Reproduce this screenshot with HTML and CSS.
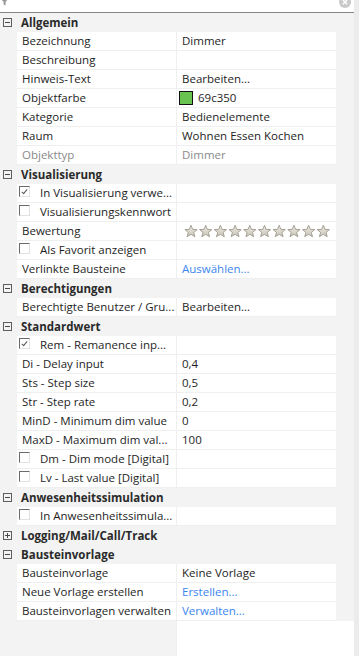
FILE: index.html
```html
<!DOCTYPE html>
<html lang="de">
<head>
<meta charset="utf-8">
<link rel="stylesheet" href="styles.css">
</head>
<body>
<div class="page">
  <div class="topbar">
    <svg class="filter" width="8" height="7" viewBox="0 0 8 7"><path d="M0 0 H7 L4.6 3 V6.5 L2.6 5.5 V3 Z" fill="#9a9a9a"/></svg>
    <span class="clear"><svg width="12" height="12" viewBox="0 0 12 12"><circle cx="6" cy="6" r="6" fill="#c9c9c9"/><path d="M3.8 3.8 L8.2 8.2 M8.2 3.8 L3.8 8.2" stroke="#fff" stroke-width="1.4"/></svg></span>
  </div>

  <div class="panel">
    <div class="group"><span class="tog minus"></span><span class="gt">Allgemein</span></div>
    <div class="row"><div class="n">Bezeichnung</div><div class="v">Dimmer</div></div>
    <div class="row"><div class="n">Beschreibung</div><div class="v"></div></div>
    <div class="row"><div class="n">Hinweis-Text</div><div class="v">Bearbeiten...</div></div>
    <div class="row"><div class="n">Objektfarbe</div><div class="v"><span class="swatch"></span>69c350</div></div>
    <div class="row"><div class="n">Kategorie</div><div class="v">Bedienelemente</div></div>
    <div class="row"><div class="n">Raum</div><div class="v">Wohnen Essen Kochen</div></div>
    <div class="row dis"><div class="n">Objekttyp</div><div class="v">Dimmer</div></div>

    <div class="group"><span class="tog minus"></span><span class="gt">Visualisierung</span></div>
    <div class="row"><div class="n chk"><span class="cb on"></span>In Visualisierung verwe...</div><div class="v"></div></div>
    <div class="row"><div class="n chk"><span class="cb"></span>Visualisierungskennwort</div><div class="v"></div></div>
    <div class="row"><div class="n">Bewertung</div><div class="v stars">
      <svg width="150" height="14" viewBox="0 0 150 14">
        <defs>
          <linearGradient id="sg" x1="0" y1="0" x2="0" y2="1"><stop offset="0" stop-color="#ecebe6"/><stop offset="1" stop-color="#c9c5b8"/></linearGradient>
          <path id="st" d="M6.5 0.8 L8.2 4.9 L12.6 5.1 L9.2 7.9 L10.4 12.2 L6.5 9.8 L2.6 12.2 L3.8 7.9 L0.4 5.1 L4.8 4.9 Z" fill="url(#sg)" stroke="#9e998a" stroke-width="0.9" stroke-linejoin="round"/>
        </defs>
        <use href="#st" x="0.5" y="0.5"/>
        <use href="#st" x="15.2" y="0.5"/>
        <use href="#st" x="29.9" y="0.5"/>
        <use href="#st" x="44.6" y="0.5"/>
        <use href="#st" x="59.3" y="0.5"/>
        <use href="#st" x="74" y="0.5"/>
        <use href="#st" x="88.7" y="0.5"/>
        <use href="#st" x="103.4" y="0.5"/>
        <use href="#st" x="118.1" y="0.5"/>
        <use href="#st" x="132.8" y="0.5"/>
      </svg>
    </div></div>
    <div class="row"><div class="n chk"><span class="cb"></span>Als Favorit anzeigen</div><div class="v"></div></div>
    <div class="row"><div class="n">Verlinkte Bausteine</div><div class="v link">Auswählen...</div></div>

    <div class="group"><span class="tog minus"></span><span class="gt">Berechtigungen</span></div>
    <div class="row"><div class="n">Berechtigte Benutzer / Gru...</div><div class="v">Bearbeiten...</div></div>

    <div class="group"><span class="tog minus"></span><span class="gt">Standardwert</span></div>
    <div class="row"><div class="n chk"><span class="cb on"></span>Rem - Remanence inp...</div><div class="v"></div></div>
    <div class="row"><div class="n">Di - Delay input</div><div class="v">0,4</div></div>
    <div class="row"><div class="n">Sts - Step size</div><div class="v">0,5</div></div>
    <div class="row"><div class="n">Str - Step rate</div><div class="v">0,2</div></div>
    <div class="row"><div class="n">MinD - Minimum dim value</div><div class="v">0</div></div>
    <div class="row"><div class="n">MaxD - Maximum dim val...</div><div class="v">100</div></div>
    <div class="row"><div class="n chk"><span class="cb"></span>Dm - Dim mode [Digital]</div><div class="v"></div></div>
    <div class="row"><div class="n chk"><span class="cb"></span>Lv - Last value [Digital]</div><div class="v"></div></div>

    <div class="group"><span class="tog minus"></span><span class="gt">Anwesenheitssimulation</span></div>
    <div class="row"><div class="n chk"><span class="cb"></span>In Anwesenheitssimula...</div><div class="v"></div></div>

    <div class="group"><span class="tog plus"></span><span class="gt">Logging/Mail/Call/Track</span></div>

    <div class="group"><span class="tog minus"></span><span class="gt">Bausteinvorlage</span></div>
    <div class="row"><div class="n">Bausteinvorlage</div><div class="v">Keine Vorlage</div></div>
    <div class="row"><div class="n">Neue Vorlage erstellen</div><div class="v link">Erstellen...</div></div>
    <div class="row"><div class="n">Bausteinvorlagen verwalten</div><div class="v link">Verwalten...</div></div>

    <div class="filler"><div class="fill-white"></div></div>
  </div>
</div>
</body>
</html>
```
FILE: styles.css
```css
html, body {
  margin: 0;
  padding: 0;
  height: 100%;
}
body {
  background: #ececec;
  font-family: "Open Sans", "Noto Sans", sans-serif;
  font-size: 11.5px;
  color: #1e1e1e;
  overflow: hidden;
}
.page {
  width: 354px;
  height: 656px;
  display: flex;
  flex-direction: column;
  background: #f3f3f3;
}
.topbar {
  height: 12px;
  flex: none;
  background: #fff;
  border-bottom: 1px solid #858585;
  position: relative;
  overflow: hidden;
}
.filter {
  position: absolute;
  left: 1px;
  top: -1px;
}
.clear {
  position: absolute;
  left: 339px;
  top: -4px;
  width: 12px;
  height: 12px;
}
.clear svg { display: block; }
.panel {
  flex: 1;
  display: flex;
  flex-direction: column;
}
.group {
  height: 19px;
  flex: none;
  display: flex;
  align-items: center;
  font-weight: bold;
  color: #2a2a2a;
}
.tog {
  width: 7px;
  height: 7px;
  border: 1px solid #5e5e5e;
  margin: 0 0 0 3px;
  position: relative;
  flex: none;
}
.tog::before {
  content: "";
  position: absolute;
  left: 1px;
  top: 3px;
  width: 5px;
  height: 1px;
  background: #4a4a4a;
}
.tog.plus::after {
  content: "";
  position: absolute;
  left: 3px;
  top: 1px;
  width: 1px;
  height: 5px;
  background: #4a4a4a;
}
.gt {
  margin-left: 9px;
  white-space: nowrap;
}
.row {
  height: 19px;
  flex: none;
  margin-left: 17px;
  width: 319px;
  display: flex;
  background: #fff;
  border-bottom: 1px solid #efefef;
  box-sizing: border-box;
}
.n {
  width: 160px;
  box-sizing: border-box;
  border-right: 1px solid #efefef;
  padding-left: 5px;
  line-height: 18px;
  white-space: nowrap;
  overflow: hidden;
  display: flex;
  align-items: center;
}
.v {
  flex: 1;
  padding-left: 5px;
  line-height: 18px;
  white-space: nowrap;
  overflow: hidden;
  display: flex;
  align-items: center;
}
.dis .n, .dis .v { color: #8a8a8a; }
.link { color: #3a86f0; }
.swatch {
  width: 14px;
  height: 14px;
  box-sizing: border-box;
  border: 1px solid #111;
  background: #69c350;
  margin-left: -3px;
  margin-right: 5px;
  flex: none;
}
.chk { padding-left: 2px; }
.cb {
  width: 11px;
  height: 11px;
  box-sizing: border-box;
  border-top: 1px solid #6a6a6a;
  border-left: 1px solid #6a6a6a;
  border-right: 1px solid #e2e2e2;
  border-bottom: 1px solid #e2e2e2;
  margin-right: 10px;
  align-self: flex-start;
  margin-top: 2px;
  position: relative;
  flex: none;
}
.cb.on::after {
  content: "";
  position: absolute;
  left: 3px;
  top: 1px;
  width: 2px;
  height: 5px;
  border-right: 1px solid #555;
  border-bottom: 1px solid #555;
  transform: rotate(40deg);
}
.stars { padding-left: 7px; }
.stars svg { display: block; }
.filler {
  flex: 1;
  display: flex;
  padding-left: 176px;
}
.fill-white {
  flex: 1;
  background: #fff;
  border-left: 1px solid #efefef;
}
```
